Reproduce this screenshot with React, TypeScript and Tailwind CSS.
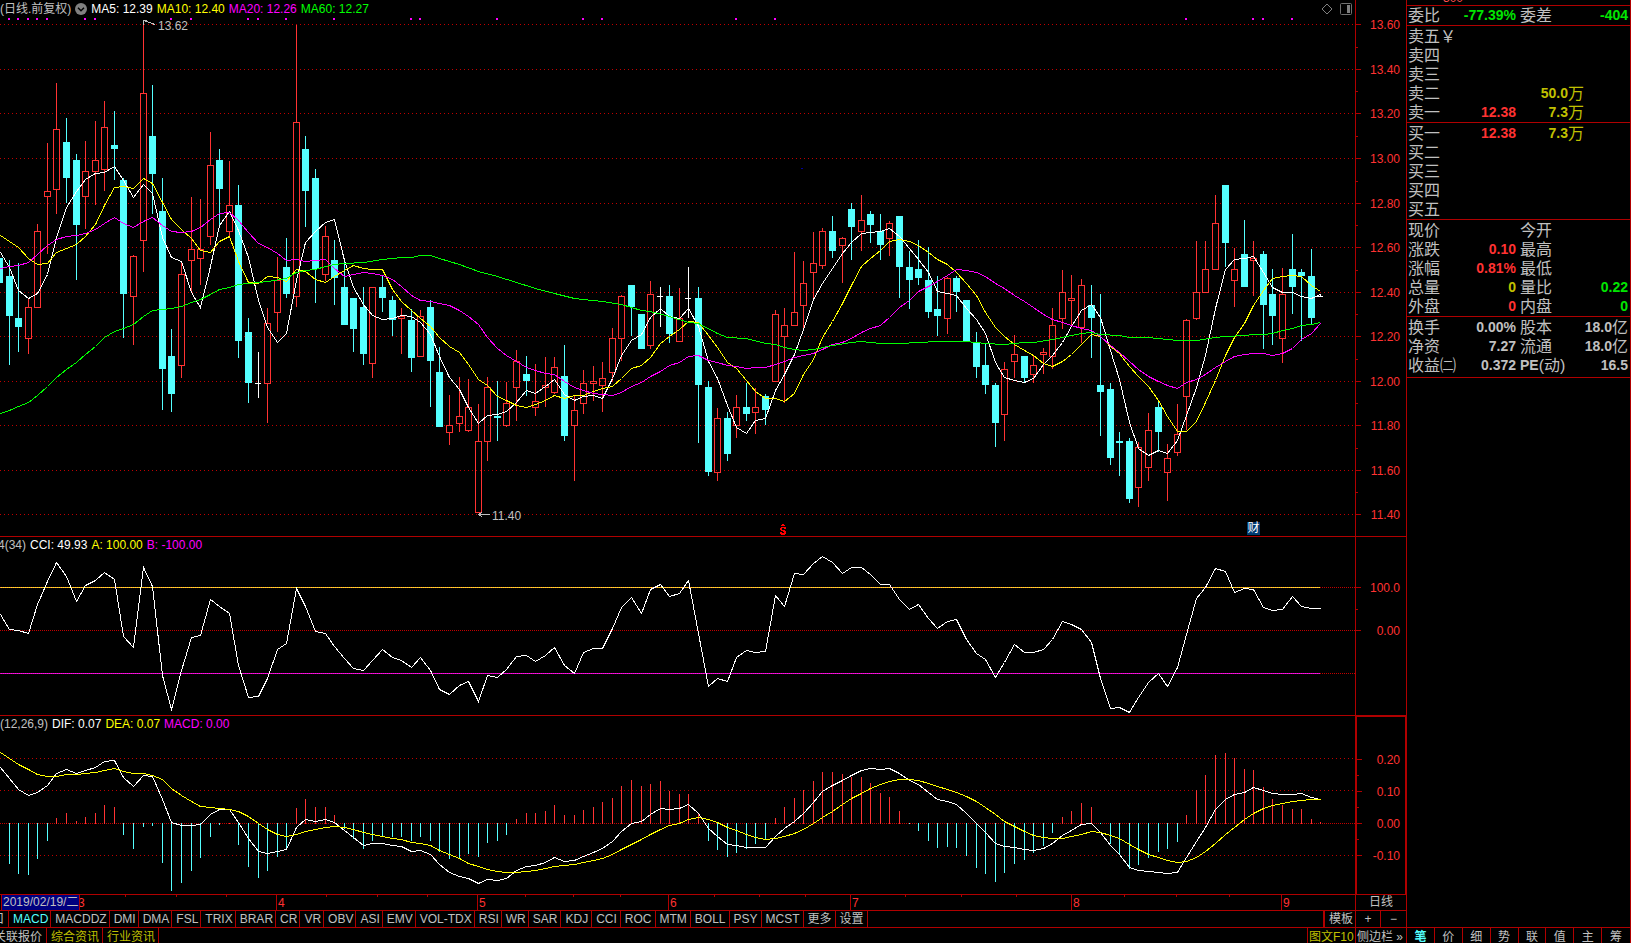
import type { ReactNode } from "react";

type Kind = "u" | "d" | "w";
type Candle = [high: number, top: number, bottom: number, low: number, kind: Kind];
type Point = [number, number];

const W = 1355;

/* x of the centre column of the i-th trading day */
const dayX = (i: number) => Math.max(0, Math.floor(9.575 * i - 0.5));

/* u = rising (hollow red), d = falling (solid cyan), w = unchanged (white cross) */
const candles: Candle[] = [
  [258, 258, 283, 283, "d"], [260, 276, 316, 365, "d"], [263, 318, 327, 352, "d"], [299, 307, 339, 354, "u"],
  [224, 231, 308, 308, "u"], [143, 191, 197, 254, "u"], [83, 129, 190, 214, "u"], [118, 142, 178, 203, "d"],
  [154, 160, 225, 280, "d"], [141, 171, 197, 229, "u"], [121, 160, 172, 205, "u"], [101, 127, 170, 191, "u"],
  [111, 145, 149, 180, "d"], [178, 180, 294, 338, "d"], [255, 256, 297, 345, "u"], [20, 93, 241, 272, "u"],
  [85, 136, 174, 214, "d"], [178, 211, 369, 410, "d"], [329, 356, 394, 412, "d"], [262, 274, 366, 378, "u"],
  [197, 249, 261, 293, "u"], [199, 249, 259, 285, "u"], [132, 165, 237, 245, "u"], [149, 160, 189, 226, "d"],
  [161, 205, 232, 237, "u"], [185, 205, 341, 358, "d"], [318, 332, 383, 403, "d"], [352, 383, 384, 398, "w"],
  [308, 323, 384, 423, "u"], [257, 280, 313, 332, "u"], [238, 267, 294, 298, "d"], [25, 122, 297, 307, "u"],
  [136, 149, 191, 227, "d"], [169, 178, 269, 303, "d"], [226, 236, 275, 281, "u"], [240, 260, 278, 305, "d"],
  [262, 287, 325, 325, "d"], [298, 298, 329, 352, "d"], [287, 307, 354, 365, "d"], [287, 287, 364, 378, "u"],
  [276, 287, 298, 312, "d"], [296, 300, 320, 336, "d"], [308, 316, 319, 354, "u"], [309, 320, 358, 372, "d"],
  [310, 316, 357, 357, "u"], [300, 307, 361, 407, "d"], [347, 372, 427, 427, "d"], [395, 425, 433, 445, "u"],
  [377, 416, 424, 432, "u"], [379, 407, 431, 432, "u"], [404, 441, 513, 513, "u"], [377, 387, 442, 461, "u"],
  [381, 416, 418, 441, "d"], [382, 403, 426, 427, "u"], [350, 361, 388, 421, "u"], [356, 374, 381, 396, "d"],
  [364, 401, 408, 416, "u"], [357, 385, 388, 407, "u"], [357, 367, 393, 394, "u"], [345, 376, 436, 441, "d"],
  [395, 410, 426, 481, "u"], [370, 383, 404, 414, "u"], [366, 381, 384, 401, "u"], [362, 378, 386, 412, "u"],
  [328, 338, 373, 381, "u"], [295, 296, 339, 361, "u"], [285, 285, 307, 336, "d"], [314, 314, 349, 349, "d"],
  [281, 294, 346, 349, "u"], [287, 296, 297, 327, "w"], [285, 296, 334, 343, "d"], [288, 318, 342, 342, "u"],
  [267, 298, 299, 318, "w"], [287, 298, 385, 443, "d"], [381, 387, 472, 476, "d"], [408, 418, 473, 481, "u"],
  [412, 418, 454, 461, "d"], [395, 407, 426, 438, "u"], [383, 407, 414, 421, "d"], [388, 407, 413, 434, "u"],
  [394, 396, 410, 425, "d"], [310, 314, 382, 382, "u"], [308, 325, 337, 403, "u"], [252, 312, 326, 326, "u"],
  [261, 283, 306, 331, "u"], [232, 263, 273, 300, "u"], [228, 231, 266, 269, "u"], [216, 231, 251, 258, "d"],
  [237, 238, 246, 283, "u"], [203, 209, 227, 260, "d"], [195, 220, 232, 251, "u"], [211, 214, 225, 243, "d"],
  [214, 231, 245, 260, "d"], [221, 223, 239, 256, "u"], [216, 216, 267, 298, "d"], [251, 267, 280, 309, "d"],
  [240, 269, 278, 285, "d"], [247, 280, 312, 318, "d"], [276, 309, 316, 336, "d"], [277, 278, 319, 334, "u"],
  [276, 278, 292, 312, "d"], [300, 300, 341, 341, "d"], [332, 342, 367, 378, "d"], [344, 365, 385, 394, "d"],
  [383, 385, 423, 447, "d"], [362, 369, 415, 441, "u"], [335, 354, 362, 378, "u"], [356, 356, 378, 383, "d"],
  [355, 365, 375, 383, "u"], [348, 352, 355, 374, "u"], [308, 325, 357, 369, "u"], [270, 292, 319, 329, "u"],
  [275, 298, 301, 326, "u"], [279, 285, 328, 343, "u"], [285, 305, 318, 358, "d"], [294, 385, 392, 436, "d"],
  [383, 389, 458, 465, "d"], [432, 441, 443, 476, "d"], [438, 441, 499, 503, "d"], [442, 447, 488, 507, "u"],
  [413, 430, 468, 481, "u"], [401, 407, 432, 452, "d"], [444, 458, 473, 501, "u"], [404, 434, 453, 456, "u"],
  [319, 320, 397, 430, "u"], [241, 292, 319, 320, "u"], [241, 269, 293, 293, "u"], [195, 223, 270, 270, "u"],
  [185, 185, 243, 267, "d"], [248, 269, 281, 307, "u"], [220, 254, 287, 287, "d"], [241, 258, 261, 296, "u"],
  [251, 254, 305, 349, "d"], [269, 294, 316, 345, "d"], [268, 294, 339, 363, "u"], [234, 269, 287, 314, "d"],
  [269, 272, 276, 341, "d"], [249, 276, 318, 324, "d"], [294, 296, 297, 297, "w"],
];

const closes = candles.map(([, top, bottom, , kind]) => (kind === "d" ? bottom : top));

/* moving average; `lead` holds the values before a full window is available */
function average(size: number, lead: number[]): Point[] {
  return closes.map((_, i) => {
    if (i < lead.length) return [i, lead[i]];
    const part = closes.slice(i - size + 1, i + 1);
    return [i, Math.round(part.reduce((a, b) => a + b, 0) / size)];
  });
}

const ma5 = average(5, [252, 267, 290, 298]);
const ma10 = average(10, [235, 241, 247, 258, 264, 263, 252, 248, 244]);
const ma20 = average(20, [268, 266, 265, 262, 254, 245, 239, 236, 235, 233, 229, 223, 217, 223, 227, 221, 217, 225, 231]);
const ma60: Point[] = [
  [0, 413], [1, 410], [2, 406], [3, 402], [4, 395], [5, 386], [6, 377], [7, 369], [8, 362], [9, 354], [10, 346],
  [11, 337], [12, 331], [13, 328], [14, 324], [15, 316], [16, 310], [17, 309], [18, 308], [19, 306], [20, 302],
  [21, 299], [22, 294], [23, 289], [24, 287], [25, 284], [26, 283], [27, 282], [28, 281], [30, 278], [31, 272],
  [32, 270], [33, 269], [34, 266], [35, 264], [36, 263], [38, 262], [40, 259], [42, 257], [43, 257], [44, 255],
  [45, 255], [46, 258], [48, 264], [50, 271], [52, 276], [54, 282], [56, 288], [58, 293], [60, 298], [61, 299],
  [63, 301], [65, 304], [67, 310], [68, 311], [70, 316], [72, 322], [73, 323], [75, 333], [76, 337], [78, 338],
  [80, 343], [81, 344], [82, 347], [83, 349], [84, 350], [85, 349], [87, 345], [89, 342], [90, 341], [92, 343],
  [94, 343], [96, 342], [98, 341], [101, 341], [103, 343], [105, 344], [107, 342], [108, 342], [110, 339],
  [112, 335], [113, 333], [114, 332], [115, 334], [117, 335], [118, 337], [120, 337], [122, 339], [123, 340],
  [125, 340], [127, 337], [128, 336], [130, 335], [131, 334], [132, 334], [133, 333], [134, 330], [135, 328],
  [136, 325], [137, 324], [138, 322],
];

const cci = [
  614, 629, 630, 633, 604, 581, 562, 576, 601, 585, 580, 572, 579, 636, 647, 567, 586, 675, 709, 670, 637, 635, 599,
  606, 613, 665, 697, 696, 678, 649, 643, 588, 606, 631, 633, 646, 658, 668, 670, 660, 649, 657, 660, 667, 657, 670,
  689, 694, 685, 681, 701, 675, 677, 669, 656, 655, 661, 655, 647, 665, 673, 652, 648, 648, 628, 607, 597, 613, 589,
  584, 596, 593, 580, 633, 686, 678, 681, 657, 650, 652, 651, 595, 606, 573, 574, 563, 556, 562, 573, 567, 567, 574,
  584, 584, 599, 609, 604, 618, 628, 621, 619, 639, 653, 659, 677, 662, 644, 652, 652, 649, 639, 621, 624, 629, 642,
  678, 708, 707, 712, 697, 682, 673, 686, 667, 634, 598, 587, 568, 571, 592, 588, 589, 607, 610, 609, 596, 606, 608,
  608,
].map((y, i): Point => [i, y - 537]);

/* MACD series, in thirds of a row */
const dif = [
  711, 745, 778, 796, 787, 766, 730, 718, 730, 721, 712, 694, 691, 740, 769, 736, 739, 808, 877, 886, 886, 882, 853,
  838, 836, 877, 925, 963, 970, 962, 957, 890, 868, 874, 868, 877, 901, 922, 946, 940, 940, 946, 949, 964, 961, 973,
  1003, 1027, 1039, 1045, 1060, 1048, 1051, 1045, 1021, 1009, 1006, 997, 982, 994, 991, 978, 967, 954, 934, 903, 878,
  873, 853, 835, 838, 835, 823, 849, 895, 918, 942, 946, 952, 952, 952, 918, 895, 873, 849, 817, 784, 766, 750, 736,
  721, 715, 718, 715, 730, 749, 763, 787, 807, 814, 823, 849, 880, 907, 940, 949, 950, 958, 959, 955, 940, 916, 901,
  883, 880, 906, 946, 973, 1012, 1021, 1024, 1025, 1030, 1026, 982, 933, 892, 838, 808, 792, 786, 771, 781, 790, 793,
  793, 790, 802, 807,
];
const dea = [
  666, 683, 701, 718, 733, 739, 737, 733, 733, 730, 727, 721, 715, 722, 730, 730, 734, 748, 775, 796, 814, 829, 832,
  835, 836, 844, 859, 880, 898, 911, 918, 912, 904, 898, 892, 889, 892, 898, 907, 913, 919, 925, 928, 937, 940, 946,
  960, 973, 985, 998, 1009, 1018, 1024, 1027, 1027, 1024, 1021, 1015, 1009, 1006, 1003, 997, 991, 985, 972, 958, 943,
  928, 912, 898, 886, 878, 866, 862, 868, 877, 891, 901, 913, 921, 928, 925, 919, 910, 898, 880, 861, 843, 823, 805,
  790, 775, 763, 754, 748, 748, 751, 760, 769, 778, 786, 799, 813, 831, 852, 874, 889, 903, 914, 921, 925, 925, 919,
  913, 904, 905, 914, 925, 943, 958, 971, 982, 991, 997, 994, 982, 964, 940, 913, 890, 867, 850, 835, 826, 820, 814,
  811, 808, 808,
];
const macdRow = (v: number) => Math.round(v / 3) - 186;
const ZERO = 107;

const signalDays = [1, 2, 3, 4, 5, 9, 10, 18, 20, 26, 27, 30, 35, 43, 44, 52, 61, 63, 77, 81, 124, 131, 132, 135];

const priceLevels: [string, number][] = [
  ["13.60", 24], ["13.40", 69], ["13.20", 113], ["13.00", 158], ["12.80", 203], ["12.60", 247],
  ["12.40", 292], ["12.20", 336], ["12.00", 381], ["11.80", 425], ["11.60", 470], ["11.40", 514],
];
const cciLevels: [string, number][] = [["100.0", 50], ["0.00", 93]];
const macdLevels: [string, number][] = [["0.20", 42], ["0.10", 74], ["0.00", 107], ["-0.10", 139]];

const months: [string, number][] = [["3", 76], ["4", 276], ["5", 477], ["6", 668], ["7", 850], ["8", 1071], ["9", 1281]];
const weekTicks = [125, 176, 226, 326, 377, 427, 525, 573, 620, 714, 759, 805, 905, 961, 1016, 1124, 1176, 1229];

const indicators = [
  "MACD", "MACDDZ", "DMI", "DMA", "FSL", "TRIX", "BRAR", "CR", "VR", "OBV", "ASI", "EMV", "VOL-TDX", "RSI", "WR",
];
const moreIndicators = ["SAR", "KDJ", "CCI", "ROC", "MTM", "BOLL", "PSY", "MCST", "更多", "设置"];

/* small "ex-dividend" marker, one character per pixel */
const dividendMark = [
  "..##..",
  ".####.",
  "......",
  ".#####",
  "##..##",
  "##....",
  ".####.",
  "...###",
  "##..##",
  "######",
  ".####.",
];

const pct = (v: number, total: number) => `${(v / total) * 100}%`;

function Plot({ height, children }: { height: number; children: ReactNode }) {
  return (
    <svg
      viewBox={`0 0 ${W} ${height}`}
      preserveAspectRatio="none"
      shapeRendering="crispEdges"
      className="absolute inset-0 h-full w-full"
      aria-hidden="true"
    >
      {children}
    </svg>
  );
}

function Grid({ y, step = 4 }: { y: number; step?: number }) {
  return <line x1={0} x2={W} y1={y + 0.5} y2={y + 0.5} stroke="#c00000" strokeDasharray={`1 ${step - 1}`} />;
}

function Curve({ points, color }: { points: Point[]; color: string }) {
  return (
    <polyline
      fill="none"
      stroke={color}
      points={points.map(([i, y]) => `${dayX(i) + 0.5},${y + 0.5}`).join(" ")}
    />
  );
}

function CandleMark({ index, data }: { index: number; data: Candle }) {
  const [high, top, bottom, low, kind] = data;
  const x = index === 0 ? -1 : dayX(index);
  if (kind === "w") {
    return (
      <g fill="#ffffff">
        <rect x={x} y={high} width={1} height={low - high} />
        <rect x={x - 3} y={top} width={6} height={1} />
      </g>
    );
  }
  if (kind === "d") {
    return (
      <g fill="#54ffff">
        <rect x={x} y={high} width={1} height={low - high} />
        <rect x={x - 3} y={top} width={7} height={bottom - top} />
      </g>
    );
  }
  return (
    <g fill="#ff3232">
      <rect x={x} y={high} width={1} height={top - high} />
      <rect x={x} y={bottom} width={1} height={low - bottom} />
      <rect x={x - 3} y={top} width={7} height={1} />
      <rect x={x - 3} y={bottom - 1} width={7} height={1} />
      <rect x={x - 3} y={top} width={1} height={bottom - top} />
      <rect x={x + 3} y={top} width={1} height={bottom - top} />
    </g>
  );
}

function Scale({
  height, levels, minor, selected = false,
}: { height: number; levels: [string, number][]; minor: number[]; selected?: boolean }) {
  return (
    <div
      className={
        selected
          ? "relative border-y border-r border-l-2 border-[#b00000]"
          : "relative border-b border-l border-[#b00000]"
      }
    >
      <svg
        viewBox={`0 0 6 ${height}`}
        preserveAspectRatio="none"
        shapeRendering="crispEdges"
        className="absolute left-0 top-0 h-full w-[6px]"
        aria-hidden="true"
      >
        {levels.map(([name, y]) => (
          <rect key={name} x={0} y={y} width={5} height={1} fill="#b00000" />
        ))}
        {minor.map((y) => (
          <rect key={y} x={0} y={y} width={2} height={1} fill="#b00000" />
        ))}
      </svg>
      <div className={selected ? "absolute inset-y-0 right-[5px] text-right" : "absolute inset-y-0 right-[6px] text-right"}>
        {levels.map(([name, y]) => (
          <span
            key={name}
            className="absolute right-0 -translate-y-1/2 leading-4 text-[#ff3232]"
            style={{ top: pct(y + 1, height) }}
          >
            {name}
          </span>
        ))}
      </div>
    </div>
  );
}

type Cell = [text: string, tone?: string];

const RED = "text-[#ff3232]";
const GREEN = "text-[#00e600]";
const OLIVE = "text-[#c0c000]";

function Num({ text }: { text: string }) {
  const m = text.match(/^(.*?)([万亿]?)$/);
  return (
    <div className="flex h-[19px] items-center justify-end">
      <span className="text-sm leading-[19px] font-bold">{m ? m[1] : text}</span>
      {m && m[2]}
    </div>
  );
}

function RowLabel({ children }: { children: ReactNode }) {
  return <div className="flex h-[19px] items-center">{children}</div>;
}

function StatTable({ rows, className }: { rows: [string, Cell, string, Cell][]; className: string }) {
  return (
    <div className={className}>
      <table className="w-full table-fixed border-collapse">
        <colgroup>
          <col className="w-[50px]" />
          <col className="w-[59px]" />
          <col className="w-[50px]" />
          <col />
        </colgroup>
        <tbody>
          {rows.map(([a, av, b, bv]) => (
            <tr key={a} className="text-base leading-[19px] whitespace-nowrap">
              <th scope="row" className="p-0 pl-px text-left font-normal"><RowLabel>{a}</RowLabel></th>
              <td className={`p-0 ${av[1] ?? ""}`}><Num text={av[0]} /></td>
              <th scope="row" className="p-0 pl-1 text-left font-normal">
                <RowLabel>
                  {b === "PE(动)" ? <><b className="text-sm leading-[19px]">PE</b>(动)</> : b}
                </RowLabel>
              </th>
              <td className={`p-0 pr-[2px] ${bv[1] ?? ""}`}><Num text={bv[0]} /></td>
            </tr>
          ))}
        </tbody>
      </table>
    </div>
  );
}

function BookTable({ rows }: { rows: [string, string, string][] }) {
  return (
    <div className="border-b border-[#b00000] pt-px">
      <table className="w-full table-fixed border-collapse">
        <colgroup>
          <col className="w-[50px]" />
          <col className="w-[59px]" />
          <col className="w-[68px]" />
          <col />
        </colgroup>
        <tbody>
          {rows.map(([name, price, volume]) => (
            <tr key={name} className="text-base leading-[19px] whitespace-nowrap">
              <th scope="row" className="p-0 pl-px text-left font-normal"><RowLabel>{name}</RowLabel></th>
              <td className={`p-0 ${RED}`}><Num text={price} /></td>
              <td className={`p-0 ${OLIVE}`}><Num text={volume} /></td>
              <td className="p-0" />
            </tr>
          ))}
        </tbody>
      </table>
    </div>
  );
}

function PricePanel() {
  return (
    <section className="relative overflow-hidden border-b border-[#b00000]">
      <Plot height={536}>
        {priceLevels.map(([name, y]) => <Grid key={name} y={y} />)}
        {signalDays.map((i) => (
          <rect key={i} x={dayX(i) - 1} y={18} width={2} height={2} fill="#ff00ff" />
        ))}
        {candles.map((c, i) => <CandleMark key={i} index={i} data={c} />)}
        <Curve points={ma5} color="#ffffff" />
        <Curve points={ma10} color="#ffff00" />
        <Curve points={ma20} color="#ff00ff" />
        <Curve points={ma60} color="#00ff00" />
        <path d="M143.5 24.5V20.5H147M143.5 20.5L155 24.5" fill="none" stroke="#c0c0c0" />
        <path d="M489.5 514.5H479.5M482.5 511.5L479 514.5L482.5 517.5" fill="none" stroke="#c0c0c0" />
        <rect x={801} y={168} width={2} height={1} fill="#0000a0" />
      </Plot>
      <div className="relative flex h-[18px] items-center justify-between">
        <div className="flex items-center gap-1 whitespace-nowrap">
          <span>(日线.前复权)</span>
          <button type="button" aria-label="指标菜单" className="size-3">
            <svg viewBox="0 0 12 12" className="size-3" aria-hidden="true">
              <circle cx="6" cy="6" r="6" fill="#808080" />
              <path d="M3 4.8L6 7.8L9 4.8" fill="none" stroke="#000000" strokeWidth="1.4" />
            </svg>
          </button>
          <span className="text-white">MA5: 12.39</span>
          <span className="text-[#ffff00]">MA10: 12.40</span>
          <span className="text-[#ff00ff]">MA20: 12.26</span>
          <span className="text-[#00ff00]">MA60: 12.27</span>
        </div>
        <div className="flex items-center gap-[7px] pr-[3px]">
          <button type="button" aria-label="标记" className="size-3">
            <svg viewBox="0 0 12 12" className="size-3" aria-hidden="true">
              <path d="M6 1L11 6L6 11L1 6Z" fill="none" stroke="#808080" />
            </svg>
          </button>
          <button type="button" aria-label="侧栏" className="size-3">
            <svg viewBox="0 0 12 12" className="size-3" aria-hidden="true">
              <rect x="0.5" y="0.5" width="11" height="11" rx="1" fill="none" stroke="#707070" />
              <rect x="7" y="2" width="3" height="8" fill="#808080" />
            </svg>
          </button>
        </div>
      </div>
      <span className="absolute -translate-y-1/2 leading-4" style={{ left: pct(158, W), top: pct(26, 536) }}>13.62</span>
      <span className="absolute -translate-y-1/2 leading-4" style={{ left: pct(492, W), top: pct(516, 536) }}>11.40</span>
      <svg
        viewBox="0 0 6 11"
        shapeRendering="crispEdges"
        className="absolute h-[11px] w-[6px]"
        style={{ left: pct(780, W), top: pct(524, 536) }}
        aria-hidden="true"
      >
        {dividendMark.flatMap((row, y) =>
          [...row].map((c, x) =>
            c === "#" ? <rect key={`${x}-${y}`} x={x} y={y} width={1} height={1} fill="#ff0000" /> : null,
          ),
        )}
      </svg>
      <span
        className="absolute h-[13px] w-[13px] bg-[#003a70] text-center leading-[13px] text-white"
        style={{ left: pct(1247, W), top: pct(522, 536) }}
      >
        财
      </span>
    </section>
  );
}

function CciPanel() {
  const end = dayX(138);
  return (
    <section className="relative overflow-hidden border-b border-[#b00000]">
      <Plot height={178}>
        <Grid y={50} step={2} />
        <Grid y={93} step={2} />
        <Grid y={136} step={2} />
        <line x1={0} x2={end} y1={50.5} y2={50.5} stroke="#ffff00" />
        <line x1={0} x2={end} y1={50.5} y2={50.5} stroke="#ff8060" strokeDasharray="1 1" />
        <line x1={0} x2={end} y1={136.5} y2={136.5} stroke="#ff00ff" />
        <line x1={0} x2={end} y1={136.5} y2={136.5} stroke="#d820a0" strokeDasharray="1 1" />
        <Curve points={cci} color="#ffffff" />
      </Plot>
      <div className="relative flex h-4 items-center gap-1 whitespace-nowrap">
        <span className="flex w-[26px] justify-end">4(34)</span>
        <span className="text-white">CCI: 49.93</span>
        <span className="text-[#ffff00]">A: 100.00</span>
        <span className="text-[#ff00ff]">B: -100.00</span>
      </div>
    </section>
  );
}

function MacdPanel() {
  return (
    <section className="relative overflow-hidden border-b border-[#b00000]">
      <Plot height={178}>
        {macdLevels.map(([name, y]) => <Grid key={name} y={y} step={name === "0.00" ? 2 : 4} />)}
        {dif.map((v, i) => {
          const size = Math.round(((v - dea[i]) * 2) / 3);
          if (i === 0) return null;
          return size > 0 ? (
            <rect key={i} x={dayX(i)} y={ZERO} width={1} height={size} fill="#54ffff" />
          ) : (
            <rect key={i} x={dayX(i)} y={ZERO + size} width={1} height={1 - size} fill="#ff3232" />
          );
        })}
        <Curve points={dif.map((v, i): Point => [i, macdRow(v)])} color="#ffffff" />
        <Curve points={dea.map((v, i): Point => [i, macdRow(v)])} color="#ffff00" />
      </Plot>
      <div className="relative flex h-4 items-center gap-1 whitespace-nowrap">
        <span>(12,26,9)</span>
        <span className="text-white">DIF: 0.07</span>
        <span className="text-[#ffff00]">DEA: 0.07</span>
        <span className="text-[#ff00ff]">MACD: 0.00</span>
      </div>
    </section>
  );
}

function DateAxis() {
  return (
    <div className="relative overflow-hidden border-b border-[#b00000]">
      <Plot height={15}>
        <rect x={1} y={0} width={1} height={15} fill="#b00000" />
        {months.map(([m, x]) => <rect key={m} x={x} y={0} width={1} height={15} fill="#b00000" />)}
        {weekTicks.map((x) => <rect key={x} x={x} y={0} width={1} height={2} fill="#b00000" />)}
      </Plot>
      {months.map(([m, x]) => (
        <span key={m} className="absolute top-0 leading-4 text-[#ff3232]" style={{ left: pct(x + 2, W) }}>{m}</span>
      ))}
      <span className="relative ml-[2px] block h-full w-[78px] overflow-hidden border-r border-[#b00000] bg-[#000080] pl-px leading-[15px] whitespace-nowrap">
        2019/02/19/二
      </span>
    </div>
  );
}

export default function App() {
  return (
    <div className="flex h-screen overflow-hidden bg-black font-['Liberation_Sans','Noto_Sans_CJK_SC',sans-serif] text-xs text-[#c0c0c0]">
      <main className="grid min-w-0 flex-1 grid-cols-[minmax(0,1fr)_51px] grid-rows-[537fr_179fr_179fr_16px_17px_15px]">
        <PricePanel />
        <Scale height={536} levels={priceLevels} minor={[47, 91, 136, 181, 225, 270, 314, 359, 403, 448, 492]} />
        <CciPanel />
        <Scale height={178} levels={cciLevels} minor={[72]} />
        <MacdPanel />
        <Scale height={178} levels={macdLevels} minor={[58, 91, 123]} selected />
        <DateAxis />
        <button type="button" className="border-b border-l border-[#b00000] text-center leading-[15px]">日线</button>

        <nav className="flex min-w-0 overflow-hidden border-b border-[#b00000] leading-4">
          <button type="button" className="flex w-[9px] justify-end overflow-hidden border-r border-[#b00000] pr-1">口</button>
          {indicators.map((name, i) => (
            <button
              key={name}
              type="button"
              className={
                i === 0
                  ? "shrink-0 border-r border-[#b00000] pr-[2px] pl-1 text-[#54ffff]"
                  : "shrink-0 border-r border-[#b00000] pr-[2px] pl-1"
              }
            >
              {name}
            </button>
          ))}
          {moreIndicators.map((name) => (
            <button key={name} type="button" className="shrink-0 border-r border-[#b00000] pr-[3px] pl-1">
              {name}
            </button>
          ))}
          <button type="button" className="ml-auto shrink-0 border-l-2 border-[#b00000] pr-[2px] pl-1">模板</button>
        </nav>
        <div className="grid grid-cols-2 border-b border-l border-[#b00000] leading-4">
          <button type="button" aria-label="放大" className="border-r border-[#b00000]">+</button>
          <button type="button" aria-label="缩小">−</button>
        </div>

        <nav className="flex min-w-0 overflow-hidden leading-[18px] whitespace-nowrap">
          <a href="#quotes" className="flex w-[47px] shrink-0 justify-end overflow-hidden border-r border-[#b00000] pr-1">关联报价</a>
          <a href="#news" className="w-14 shrink-0 border-r border-[#b00000] pl-1 text-[#c0c000]">综合资讯</a>
          <a href="#industry" className="w-14 shrink-0 border-r border-[#b00000] pl-1 text-[#c0c000]">行业资讯</a>
          <a href="#f10" className="ml-auto w-12 shrink-0 border-l border-[#b00000] pl-px text-[#c0c000]">图文F10</a>
        </nav>
        <a href="#sidebar" className="overflow-hidden border-l border-[#b00000] pl-px leading-[18px] whitespace-nowrap">侧边栏 »</a>
      </main>

      <aside className="flex w-[225px] shrink-0 flex-col border-x border-[#b00000]">
        <div className="relative h-[6px] overflow-hidden border-b border-[#b00000]">
          <span className="absolute bottom-[1px] left-9 leading-3 text-[#ff5050]">300</span>
        </div>
        <StatTable
          className="border-b border-[#b00000]"
          rows={[["委比", ["-77.39%", GREEN], "委差", ["-404", GREEN]]]}
        />
        <BookTable
          rows={[["卖五￥", "", ""], ["卖四", "", ""], ["卖三", "", ""], ["卖二", "", "50.0万"], ["卖一", "12.38", "7.3万"]]}
        />
        <BookTable
          rows={[["买一", "12.38", "7.3万"], ["买二", "", ""], ["买三", "", ""], ["买四", "", ""], ["买五", "", ""]]}
        />
        <StatTable
          className="border-b border-[#b00000] pt-px"
          rows={[
            ["现价", [""], "今开", [""]],
            ["涨跌", ["0.10", RED], "最高", [""]],
            ["涨幅", ["0.81%", RED], "最低", [""]],
            ["总量", ["0", OLIVE], "量比", ["0.22", GREEN]],
            ["外盘", ["0", RED], "内盘", ["0", GREEN]],
          ]}
        />
        <StatTable
          className="border-b border-[#b00000] pt-px pb-[2px]"
          rows={[
            ["换手", ["0.00%"], "股本", ["18.0亿"]],
            ["净资", ["7.27"], "流通", ["18.0亿"]],
            ["收益㈡", ["0.372"], "PE(动)", ["16.5"]],
          ]}
        />
        <nav className="mt-auto grid h-4 grid-cols-8 overflow-hidden border-t border-[#b00000] leading-[18px]">
          {["笔", "价", "细", "势", "联", "值", "主", "筹"].map((t, i) => (
            <button
              key={t}
              type="button"
              className={
                i === 0
                  ? "border-r border-[#b00000] font-bold text-[#54ffff]"
                  : "border-r border-[#b00000] last:border-r-0"
              }
            >
              {t}
            </button>
          ))}
        </nav>
      </aside>
    </div>
  );
}
